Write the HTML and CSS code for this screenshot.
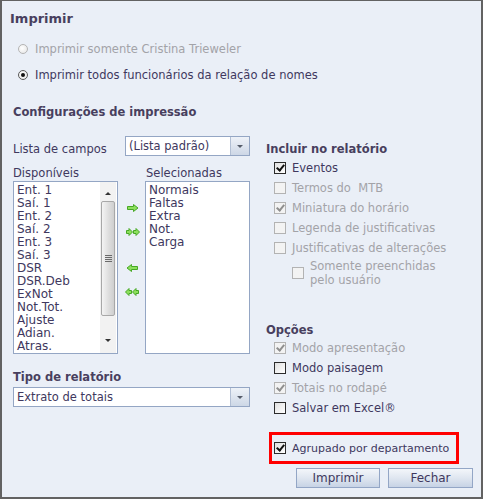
FILE: index.html
```html
<!DOCTYPE html>
<html>
<head>
<meta charset="utf-8">
<link rel="stylesheet" href="styles.css">
</head>
<body>
<div class="window">
  <div class="title">Imprimir</div>
  <div class="radios">
    <div class="radio-row disabled"><span class="radio"></span><span>Imprimir somente Cristina Trieweler</span></div>
    <div class="radio-row"><span class="radio checked"></span><span>Imprimir todos funcionários da relação de nomes</span></div>
  </div>
  <div class="heading config">Configurações de impressão</div>
  <div class="columns">
    <div class="left">
      <div class="field-row">
        <span class="field-label">Lista de campos</span>
        <div class="select small"><span class="select-text">(Lista padrão)</span><span class="select-btn"><span class="tri"></span></span></div>
      </div>
      <div class="list-labels"><span class="ll-left">Disponíveis</span><span class="ll-right">Selecionadas</span></div>
      <div class="lists">
        <div class="listbox">
          <ul class="items">
            <li>Ent. 1</li><li>Saí. 1</li><li>Ent. 2</li><li>Saí. 2</li><li>Ent. 3</li><li>Saí. 3</li><li>DSR</li><li>DSR.Deb</li><li>ExNot</li><li>Not.Tot.</li><li>Ajuste</li><li>Adian.</li><li>Atras.</li>
          </ul>
          <div class="scrollbar">
            <span class="sb-up"></span>
            <span class="sb-thumb"><span class="grip"></span></span>
            <span class="sb-down"></span>
          </div>
        </div>
        <div class="arrows">
          <svg class="arr a1" width="12" height="8" viewBox="0 0 12 8"><path d="M0.5 2.5H6.5V0.5L11 4L6.5 7.5V5.5H0.5Z" fill="#8ddf5e" stroke="#47a825" stroke-width="1"/></svg>
          <svg class="arr a2" width="14" height="8" viewBox="0 0 14 8"><path d="M0.5 2.5H3V0.5L6.5 4L3 7.5V5.5H0.5Z" fill="#8ddf5e" stroke="#47a825"/><path d="M7.5 2.5H10V0.5L13.5 4L10 7.5V5.5H7.5Z" fill="#8ddf5e" stroke="#47a825"/></svg>
          <svg class="arr a3" width="12" height="8" viewBox="0 0 12 8"><path d="M11.5 2.5H5.5V0.5L1 4L5.5 7.5V5.5H11.5Z" fill="#8ddf5e" stroke="#47a825" stroke-width="1"/></svg>
          <svg class="arr a4" width="14" height="8" viewBox="0 0 14 8"><path d="M6.5 2.5H4V0.5L0.5 4L4 7.5V5.5H6.5Z" fill="#8ddf5e" stroke="#47a825"/><path d="M13.5 2.5H11V0.5L7.5 4L11 7.5V5.5H13.5Z" fill="#8ddf5e" stroke="#47a825"/></svg>
        </div>
        <div class="listbox sel">
          <ul class="items">
            <li>Normais</li><li>Faltas</li><li>Extra</li><li>Not.</li><li>Carga</li>
          </ul>
        </div>
      </div>
      <div class="heading tipo">Tipo de relatório</div>
      <div class="select wide"><span class="select-text">Extrato de totais</span><span class="select-btn"><span class="tri"></span></span></div>
    </div>
    <div class="right">
      <div class="heading incl">Incluir no relatório</div>
      <div class="checks first">
        <div class="chk-row"><span class="box checked"></span><span>Eventos</span></div>
        <div class="chk-row disabled"><span class="box"></span><span>Termos do&nbsp; MTB</span></div>
        <div class="chk-row disabled"><span class="box checked"></span><span>Miniatura do horário</span></div>
        <div class="chk-row disabled"><span class="box"></span><span>Legenda de justificativas</span></div>
        <div class="chk-row disabled"><span class="box"></span><span>Justificativas de alterações</span></div>
        <div class="chk-row sub disabled"><span class="box"></span><span class="two">Somente preenchidas<br>pelo usuário</span></div>
      </div>
      <div class="heading opc">Opções</div>
      <div class="checks">
        <div class="chk-row disabled"><span class="box checked"></span><span>Modo apresentação</span></div>
        <div class="chk-row"><span class="box"></span><span>Modo paisagem</span></div>
        <div class="chk-row disabled"><span class="box checked"></span><span>Totais no rodapé</span></div>
        <div class="chk-row"><span class="box"></span><span>Salvar em Excel®</span></div>
      </div>
      <div class="highlight">
        <div class="chk-row"><span class="box checked"></span><span class="nowrap">Agrupado por departamento</span></div>
      </div>
      <div class="buttons">
        <button class="btn b1">Imprimir</button>
        <button class="btn b2">Fechar</button>
      </div>
    </div>
  </div>
</div>
</body>
</html>
```

FILE: styles.css
```css
html, body {
  margin: 0;
  padding: 0;
}
body {
  font-family: "DejaVu Sans", Verdana, sans-serif;
  font-size: 11.5px;
  color: #40385e;
}
.window {
  width: 483px;
  height: 499px;
  box-sizing: border-box;
  border: 2px solid #626262;
  border-top-width: 1px;
  background: #eaeff7;
  padding: 0;
  overflow: hidden;
}
.title {
  margin: 8px 0 0 8px;
  height: 20px;
  line-height: 20px;
  font-weight: bold;
  font-size: 13px;
  color: #483f5e;
}
.radios {
  margin-top: 10px;
  padding-left: 16px;
  display: flex;
  flex-direction: column;
  gap: 6px;
}
.radio-row {
  height: 20px;
  display: flex;
  align-items: center;
  gap: 7px;
}
.radio-row.disabled { color: #a3a3a8; }
.radio {
  width: 10px;
  height: 10px;
  box-sizing: border-box;
  border-radius: 50%;
  border: 1px solid #5a5a5a;
  background: radial-gradient(circle at 40% 40%, #ffffff, #e3e3e3);
  position: relative;
}
.radio-row.disabled .radio { border-color: #b4b4b4; }
.radio.checked::after {
  content: "";
  position: absolute;
  left: 2px;
  top: 2px;
  width: 4px;
  height: 4px;
  border-radius: 50%;
  background: #111;
}
.heading {
  font-weight: bold;
  height: 16px;
  line-height: 16px;
  color: #483f5e;
}
.config {
  margin: 19px 0 0 11px;
}
.columns {
  display: flex;
  margin-top: 15px;
  padding-left: 11px;
  gap: 16px;
}
.left {
  width: 237px;
  display: flex;
  flex-direction: column;
}
.field-row {
  display: flex;
  align-items: flex-end;
  height: 21px;
}
.field-label {
  width: 112px;
  line-height: 14px;
}
.select {
  display: flex;
  box-sizing: border-box;
  border: 1px solid #94a6c4;
  background: #fff;
  height: 20px;
}
.select.small { width: 125px; }
.select.wide { width: 237px; margin-top: 2px; }
.select-text {
  flex: 1;
  padding-left: 3px;
  line-height: 18px;
  color: #40385e;
}
.select-btn {
  width: 18px;
  border-left: 1px solid #b2bfd4;
  background: linear-gradient(#eef2f8, #cdd7e6);
  display: flex;
  align-items: center;
  justify-content: center;
}
.tri {
  width: 0;
  height: 0;
  border-left: 3px solid transparent;
  border-right: 3px solid transparent;
  border-top: 3px solid #555c6a;
}
.list-labels {
  display: flex;
  margin-top: 9px;
  height: 16px;
  line-height: 16px;
}
.ll-left { width: 133px; }
.lists {
  display: flex;
  height: 173px;
}
.listbox {
  width: 105px;
  height: 173px;
  box-sizing: border-box;
  border: 1px solid #94a6c4;
  background: #fff;
  display: flex;
}
.items {
  list-style: none;
  margin: 0;
  padding: 2px 0 0 3px;
  flex: 1;
  font-size: 12px;
  line-height: 13px;
  overflow: hidden;
}
.scrollbar {
  width: 16px;
  margin-right: 1px;
  background: #f2f2f2;
  display: flex;
  flex-direction: column;
  align-items: center;
}
.sb-up, .sb-down {
  height: 19px;
  width: 16px;
  position: relative;
}
.sb-up::after, .sb-down::after {
  content: "";
  position: absolute;
  left: 5px;
  width: 0;
  height: 0;
  border-left: 3px solid transparent;
  border-right: 3px solid transparent;
}
.sb-up::after { top: 10px; border-bottom: 3px solid #333; }
.sb-down::after { top: 5px; border-top: 3px solid #333; }
.sb-thumb {
  width: 14px;
  height: 115px;
  box-sizing: border-box;
  border: 1px solid #a8a8a8;
  border-radius: 2px;
  background: linear-gradient(90deg, #f4f4f4, #dcdcdc 60%, #cfcfcf);
  display: flex;
  align-items: center;
  justify-content: center;
  flex: none;
}
.sb-thumb + .sb-down { margin-top: auto; }
.grip {
  width: 7px;
  height: 7px;
  background: repeating-linear-gradient(#6a6a6a 0 1px, transparent 1px 2px);
}
.arrows {
  width: 27px;
  position: relative;
}
.arr { position: absolute; }
.a1 { left: 9px; top: 23px; }
.a2 { left: 8px; top: 47px; }
.a3 { left: 8px; top: 83px; }
.a4 { left: 7px; top: 107px; }
.tipo { margin-top: 15px; }
.right {
  flex: 1;
  display: flex;
  flex-direction: column;
  padding-top: 6px;
}
.checks {
  display: flex;
  flex-direction: column;
  margin-left: 8px;
}
.checks.first { margin-top: 1px; }
.chk-row {
  display: flex;
  align-items: center;
  gap: 6px;
  height: 20px;
}
.chk-row.disabled { color: #a3a3a8; }
.box {
  width: 12px;
  height: 12px;
  box-sizing: border-box;
  border: 1px solid #2b2b2b;
  background: linear-gradient(135deg, #e0e0e0, #ffffff);
  position: relative;
  flex: none;
}
.chk-row.disabled .box {
  border-color: #b3b3b3;
  background: #f3f3f3;
}
.box.checked::after {
  content: "";
  position: absolute;
  left: 3px;
  top: 0px;
  width: 3px;
  height: 6px;
  border: solid #111;
  border-width: 0 2px 2px 0;
  transform: rotate(40deg);
}
.chk-row.disabled .box.checked::after { border-color: #8f8f8f; }
.chk-row.sub {
  height: 28px;
  margin-left: 18px;
  margin-top: 1px;
}
.two { line-height: 14px; }
.opc { margin-top: 35px; }
.highlight {
  margin-top: 14px;
  margin-left: 3px;
  width: 190px;
  height: 32px;
  box-sizing: border-box;
  border: 3px solid #ff0000;
  padding-left: 2px;
  display: flex;
  align-items: center;
}
.highlight .chk-row { color: #40385e; }
.nowrap { white-space: nowrap; font-size: 11px; }
.buttons {
  display: flex;
  gap: 8px;
  margin-top: 4px;
  margin-left: 30px;
}
.btn {
  height: 20px;
  box-sizing: border-box;
  border: 1px solid #93a6c6;
  background: linear-gradient(#f3f6fa, #dfe6f0 50%, #c7d3e5);
  font-family: "DejaVu Sans", Verdana, sans-serif;
  font-size: 12px;
  color: #40385e;
  padding: 0;
}
.b1 { width: 84px; }
.b2 { width: 85px; }
```
